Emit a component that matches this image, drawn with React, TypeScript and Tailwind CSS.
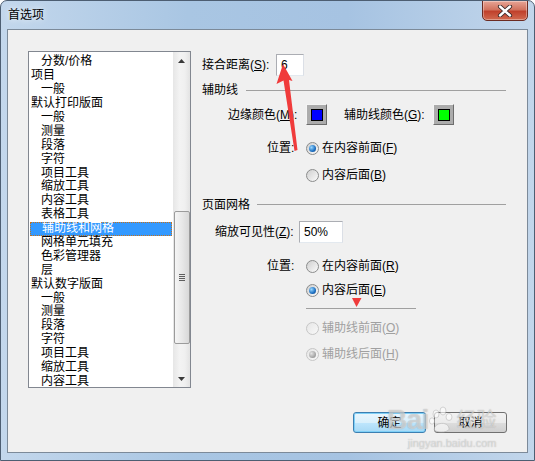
import React from "react";

type Item = [string, number];

const items: Item[] = [
  ["分数/价格", 1],
  ["项目", 0],
  ["一般", 1],
  ["默认打印版面", 0],
  ["一般", 1],
  ["测量", 1],
  ["段落", 1],
  ["字符", 1],
  ["项目工具", 1],
  ["缩放工具", 1],
  ["内容工具", 1],
  ["表格工具", 1],
  ["辅助线和网格", 1],
  ["网格单元填充", 1],
  ["色彩管理器", 1],
  ["层", 1],
  ["默认数字版面", 0],
  ["一般", 1],
  ["测量", 1],
  ["段落", 1],
  ["字符", 1],
  ["项目工具", 1],
  ["缩放工具", 1],
  ["内容工具", 1],
];

const SELECTED = 12;

function Mn({ t, k }: { t: string; k: string }) {
  return (
    <span className="whitespace-nowrap">
      {t}(<span className="underline underline-offset-1">{k}</span>)
    </span>
  );
}

function Radio({ checked, disabled }: { checked?: boolean; disabled?: boolean }) {
  return (
    <span
      className={
        disabled
          ? "flex h-[13px] w-[13px] shrink-0 items-center justify-center rounded-full border border-[#c6c6c6] bg-gradient-to-br from-[#e6e6e6] to-[#f8f8f8]"
          : "flex h-[13px] w-[13px] shrink-0 items-center justify-center rounded-full border border-[#8b8c8c] bg-gradient-to-br from-[#cfcfcf] to-[#fbfbfb]"
      }
    >
      {checked && (
        <span
          className={
            disabled
              ? "h-[7px] w-[7px] rounded-full bg-[radial-gradient(circle_at_35%_35%,#e4e4e4,#9a9a9a_75%)]"
              : "h-[7px] w-[7px] rounded-full bg-[radial-gradient(circle_at_35%_35%,#9ad8ff,#1c6fc2_60%,#0d3f7a)]"
          }
        />
      )}
    </span>
  );
}

function Swatch({ color }: { color: string }) {
  return (
    <span className="flex h-[21px] w-[21px] shrink-0 items-center justify-center border border-t-[#f4f4f4] border-l-[#f4f4f4] border-r-[#6d6d6d] border-b-[#6d6d6d] bg-[#acacac]">
      <span className="h-[12px] w-[12px] border border-black" style={{ background: color }} />
    </span>
  );
}

function TextBox({ value, w }: { value: string; w: string }) {
  return (
    <span
      className={
        "flex h-[22px] shrink-0 items-center border border-[#abadb3] border-b-[#e3e9ef] border-r-[#dbdfe6] bg-white pl-[4px] text-[12px] " +
        w
      }
    >
      {value}
    </span>
  );
}

function ScrollArrow({ up }: { up?: boolean }) {
  return (
    <div className="flex h-[17px] items-center justify-center">
      <svg width="7" height="4" viewBox="0 0 7 4">
        {up ? <polygon points="3.5,0 7,4 0,4" fill="#3a3a3a" /> : <polygon points="0,0 7,0 3.5,4" fill="#3a3a3a" />}
      </svg>
    </div>
  );
}

export default function App() {
  return (
    <div className="relative flex h-[461px] w-[535px] flex-col overflow-hidden rounded-t-[7px] border border-[#4d5e72] bg-[linear-gradient(90deg,#c3d7ec,#a9c6e3_35%,#a6c3e2_65%,#c2d6eb)] font-['Liberation_Sans','Noto_Sans_CJK_SC',sans-serif] text-[12px] text-black">
      {/* title bar */}
      <div className="flex h-[28px] shrink-0 items-start justify-between">
        <span className="pl-[7px] pt-[6px] leading-[16px] text-black [text-shadow:0_0_6px_#ffffff]">首选项</span>
        <div className="mr-[6px] -mt-[1px] flex h-[21px] w-[46px] items-center justify-center rounded-b-[5px] border border-[#6b2b22] bg-[linear-gradient(180deg,#e7a596,#d2735f_45%,#c0412c_55%,#d16a50)] shadow-[inset_0_0_0_1px_rgba(255,255,255,0.35)]">
          <svg width="16" height="12" viewBox="0 0 16 12">
            <path d="M3 1.5 L13 10.5 M13 1.5 L3 10.5" stroke="#3b2a2a" strokeWidth="4.2" strokeLinecap="round" />
            <path d="M3 1.5 L13 10.5 M13 1.5 L3 10.5" stroke="#ffffff" strokeWidth="2.4" strokeLinecap="round" />
          </svg>
        </div>
      </div>

      {/* client area */}
      <div className="mx-[6px] mb-[7px] flex flex-1 flex-col border border-[#7c8a99] bg-[#f0f0f0]">
        <div className="flex items-start pl-[20px] pt-[21px]">
          {/* category list */}
          <div className="flex h-[337px] w-[163px] shrink-0 border border-[#828790] bg-white">
            <div className="flex flex-1 flex-col overflow-hidden pt-[3px]">
              {items.map(([label, indent], idx) => (
                <div
                  key={label + idx}
                  className={
                    "mx-[1px] flex h-[13.9px] shrink-0 items-center whitespace-nowrap leading-[13px] " +
                    (indent ? "pl-[11px] " : "pl-[1px] ") +
                    (idx === SELECTED ? "border border-dotted border-[#c4711b] bg-[#3399ff] text-white" : "")
                  }
                >
                  {label}
                </div>
              ))}
            </div>
            <div className="flex w-[17px] shrink-0 flex-col bg-[linear-gradient(90deg,#e6e6e6,#f3f3f3_40%,#f0f0f0_70%,#e3e3e3)]">
              <ScrollArrow up />
              <div className="flex-1">
                <div className="mx-auto mt-[142px] flex h-[133px] w-[16px] items-center justify-center rounded-[2px] border border-[#9b9b9b] bg-[linear-gradient(90deg,#f5f5f5,#e8e8e8_50%,#d8d8d8)]">
                  <div className="flex w-[6px] flex-col gap-[1px]">
                    <span className="h-[1px] bg-[#5e5e5e]" />
                    <span className="h-[1px] bg-[#5e5e5e]" />
                    <span className="h-[1px] bg-[#5e5e5e]" />
                    <span className="h-[1px] bg-[#5e5e5e]" />
                  </div>
                </div>
              </div>
              <ScrollArrow />
            </div>
          </div>

          {/* settings panel */}
          <div className="ml-[11px] flex w-[304px] flex-col">
            <div className="mt-[3px] flex h-[22px] items-center">
              <span className="w-[74px]">
                <Mn t="接合距离" k="S" />:
              </span>
              <TextBox value="6" w="w-[28px]" />
            </div>

            <div className="mt-[6px] flex h-[16px] items-center gap-[8px]">
              <span>辅助线</span>
              <span className="h-[1px] flex-1 bg-[#a0a0a0]" />
            </div>

            <div className="mt-[6px] flex h-[21px] items-center">
              <span className="ml-[26px] w-[78px]">
                <Mn t="边缘颜色" k="M" />:
              </span>
              <Swatch color="#0000ff" />
              <span className="ml-[17px] w-[89px]">
                <Mn t="辅助线颜色" k="G" />:
              </span>
              <Swatch color="#00ff00" />
            </div>

            <div className="mt-[15px] flex h-[16px] items-center">
              <span className="ml-[65px] w-[39px]">位置:</span>
              <Radio checked />
              <span className="ml-[3px]">
                <Mn t="在内容前面" k="F" />
              </span>
            </div>

            <div className="mt-[11px] flex h-[16px] items-center pl-[104px]">
              <Radio />
              <span className="ml-[3px]">
                <Mn t="内容后面" k="B" />
              </span>
            </div>

            <div className="mt-[13px] flex h-[17px] items-center gap-[7px]">
              <span>页面网格</span>
              <span className="h-[1px] flex-1 bg-[#a0a0a0]" />
            </div>

            <div className="mt-[8px] flex h-[22px] items-center">
              <span className="ml-[13px] w-[84px]">
                <Mn t="缩放可见性" k="Z" />:
              </span>
              <TextBox value="50%" w="w-[44px]" />
            </div>

            <div className="mt-[15px] flex h-[16px] items-center">
              <span className="ml-[65px] w-[39px]">位置:</span>
              <Radio />
              <span className="ml-[3px]">
                <Mn t="在内容前面" k="R" />
              </span>
            </div>

            <div className="mt-[8px] flex h-[16px] items-center pl-[104px]">
              <Radio checked />
              <span className="ml-[3px]">
                <Mn t="内容后面" k="E" />
              </span>
            </div>

            <div className="ml-[104px] mt-[10px] h-[1px] w-[110px] bg-[#a0a0a0]" />

            <div className="mt-[11px] flex h-[16px] items-center pl-[104px] text-[#a0a0a0]">
              <Radio disabled />
              <span className="ml-[3px]">
                <Mn t="辅助线前面" k="O" />
              </span>
            </div>

            <div className="mt-[10px] flex h-[16px] items-center pl-[104px] text-[#a0a0a0]">
              <Radio checked disabled />
              <span className="ml-[3px]">
                <Mn t="辅助线后面" k="H" />
              </span>
            </div>
          </div>
        </div>

        {/* dialog buttons */}
        <div className="mt-[24px] flex justify-end gap-[8px] pr-[20px]">
          <button className="flex h-[21px] w-[73px] items-center justify-center rounded-[3px] border border-[#3c7fb1] bg-[linear-gradient(180deg,#eaf6fd,#d9f0fc_50%,#bee6fd_51%,#a7d9f5)] shadow-[0_0_0_1px_#7fd0f7_inset]">
            确定
          </button>
          <button className="flex h-[21px] w-[73px] items-center justify-center rounded-[3px] border border-[#707070] bg-[linear-gradient(180deg,#f2f2f2,#ebebeb_50%,#dddddd_51%,#cfcfcf)]">
            取消
          </button>
        </div>
      </div>

      {/* watermark */}
      <div className="pointer-events-none absolute left-[386px] top-[404px] flex flex-col items-end text-white/45 [text-shadow:0_0_1px_rgba(120,120,120,0.6)]">
        <div className="flex items-center">
          <span className="text-[28px] font-bold leading-[30px] tracking-tight">Bai</span>
          <svg width="28" height="28" viewBox="0 0 28 28" className="opacity-60">
            <g fill="#ffffff" stroke="#b0b0b0" strokeWidth="0.8">
              <ellipse cx="8" cy="8" rx="3" ry="4" />
              <ellipse cx="15" cy="5" rx="3" ry="4" />
              <ellipse cx="21" cy="11" rx="3" ry="3.5" />
              <ellipse cx="4" cy="15" rx="2.6" ry="3.2" />
              <path d="M6 24 C6 16 20 15 21 22 C22 27 9 27 6 24 Z" />
            </g>
          </svg>
          <span className="text-[20px] leading-[30px]">经验</span>
        </div>
        <span className="mt-[2px] text-[11px] leading-[12px]">jingyan.baidu.com</span>
      </div>

      {/* red annotations */}
      <svg className="pointer-events-none absolute left-[-1px] top-[-1px]" width="535" height="461" viewBox="0 0 535 461">
        <polygon
          points="283,64 276.5,84 283.5,80.5 294.5,151 297.5,150 289,80 292.5,81"
          fill="#f03b3b"
        />
        <polygon points="352,298 361.5,298 356.5,307" fill="#f03b3b" />
      </svg>
    </div>
  );
}
